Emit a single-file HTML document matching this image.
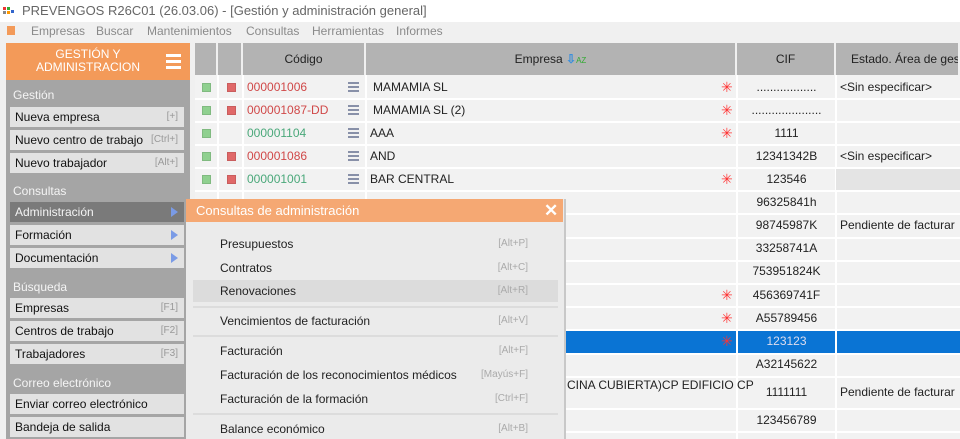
<!DOCTYPE html><html><head><meta charset="utf-8"><style>
*{margin:0;padding:0;box-sizing:border-box}
body{width:960px;height:439px;overflow:hidden;background:#f0f0f0;font-family:"Liberation Sans",sans-serif;font-size:12px;color:#222;position:relative}
.a{position:absolute}
.title{left:0;top:0;width:960px;height:22px;background:#fff;color:#666;font-size:13px;line-height:22px;padding-left:22px}
.menu{left:0;top:22px;width:960px;height:18px;background:#f0f0f0;color:#8a8a8a;font-size:12px;line-height:18px}
.menu span{position:absolute;top:0}
.lp{left:6px;top:43px;width:184px;height:396px;background:#a5a5a5}
.oh{left:6px;top:43px;width:184px;height:37px;background:#f39a59;color:#fff;font-size:12px;text-align:center;line-height:13px;padding-top:5px;padding-right:20px}
.sec{left:13px;color:#f4f4f4;font-size:12px}
.btn{left:10px;width:174px;height:20px;background:#e2e2e2;line-height:20px;padding-left:5px;font-size:12px;color:#111}
.btn i{position:absolute;right:6px;font-style:normal;font-size:10px;color:#999}
.btn.d{background:#7a7a7a;color:#f4f4f4}
.tri{position:absolute;right:6px;top:5px;width:0;height:0;border-left:7px solid #7a9be6;border-top:5px solid transparent;border-bottom:5px solid transparent}
.grid{left:195px;top:43px;width:765px;height:396px;background:#f2f2f2}
.hd{top:43px;height:32px;background:#b3b3b3;line-height:32px;text-align:center;font-size:12px;color:#222;border-right:2px solid #f0f0f0}
.hl{left:195px;width:765px;height:2px;background:#fff}
.vl{width:2px;background:#fff;top:75px;height:364px}
.cell{font-size:12px;line-height:23px}
.sq{width:9px;height:9px;border:1px solid rgba(0,0,0,0.1)}
.pop{left:186px;top:199px;width:380px;height:240px;background:#ebebeb;border-right:2px solid #c8c8c8}
.ph{left:186px;top:199px;width:377px;height:23px;background:#f5a873;color:#fff;font-size:13px;line-height:23px;padding-left:10px}
.it{left:220px;font-size:12px;color:#222}
.sc{left:450px;width:78px;text-align:right;font-size:10px;color:#aaa}
.sep{left:193px;width:365px;height:2px;background:#dcdcdc}
.ast{color:#f33;font-size:14px}
</style></head><body>
<div class="a title">PREVENGOS R26C01 (26.03.06) - [Gestión y administración general]</div>
<div class="a" style="left:3px;top:7px;width:12px;height:10px">
<div class="a" style="left:0;top:0;width:3px;height:3px;background:#e33"></div><div class="a" style="left:4px;top:0;width:3px;height:3px;background:#3a3"></div><div class="a" style="left:8px;top:3px;width:3px;height:3px;background:#36c"></div><div class="a" style="left:0;top:4px;width:3px;height:3px;background:#888"></div><div class="a" style="left:4px;top:4px;width:3px;height:3px;background:#f90"></div></div>
<div class="a menu"><span style="left:7px;top:4px;width:8px;height:9px;background:#f39a59"></span><span style="left:31px">Empresas</span><span style="left:96px">Buscar</span><span style="left:147px">Mantenimientos</span><span style="left:246px">Consultas</span><span style="left:312px">Herramientas</span><span style="left:396px">Informes</span></div>

<div class="a lp"></div>
<div class="a oh">GESTIÓN Y<br>ADMINISTRACION</div>
<div class="a" style="left:166px;top:54px;width:15px;height:3px;background:#fff;box-shadow:0 6px 0 #fff,0 12px 0 #fff"></div>
<div class="a sec" style="top:88px">Gestión</div>
<div class="a btn" style="top:107px">Nueva empresa<i>[+]</i></div>
<div class="a btn" style="top:130px">Nuevo centro de trabajo<i>[Ctrl+]</i></div>
<div class="a btn" style="top:153px">Nuevo trabajador<i>[Alt+]</i></div>
<div class="a sec" style="top:184px">Consultas</div>
<div class="a btn d" style="top:202px">Administración<span class="tri"></span></div>
<div class="a btn" style="top:225px">Formación<span class="tri"></span></div>
<div class="a btn" style="top:248px">Documentación<span class="tri"></span></div>
<div class="a sec" style="top:280px">Búsqueda</div>
<div class="a btn" style="top:298px">Empresas<i>[F1]</i></div>
<div class="a btn" style="top:321px">Centros de trabajo<i>[F2]</i></div>
<div class="a btn" style="top:344px">Trabajadores<i>[F3]</i></div>
<div class="a sec" style="top:376px">Correo electrónico</div>
<div class="a btn" style="top:394px">Enviar correo electrónico</div>
<div class="a btn" style="top:417px">Bandeja de salida</div>

<div class="a grid"></div>
<div class="a hd" style="left:195px;width:23px"></div>
<div class="a hd" style="left:218px;width:25px"></div>
<div class="a hd" style="left:243px;width:123px">Código</div>
<div class="a hd" style="left:366px;width:371px">Empresa <span style="color:#3a8fdc;font-weight:bold">⇩</span><span style="color:#3a3;font-size:8px">AZ</span></div>
<div class="a hd" style="left:737px;width:99px">CIF</div>
<div class="a hd" style="left:836px;width:124px;text-align:left;padding-left:15px;white-space:nowrap;overflow:hidden">Estado. Área de gestión</div>
<div class="a" style="left:566px;top:331px;width:394px;height:22px;background:#0a74d4"></div>
<div class="a hl" style="top:98px"></div><div class="a hl" style="top:121px"></div><div class="a hl" style="top:144px"></div><div class="a hl" style="top:167px"></div><div class="a hl" style="top:190px"></div><div class="a hl" style="top:213px"></div><div class="a hl" style="top:237px"></div><div class="a hl" style="top:260px"></div><div class="a hl" style="top:283px"></div><div class="a hl" style="top:306px"></div><div class="a hl" style="top:329px"></div><div class="a hl" style="top:353px"></div><div class="a hl" style="top:376px"></div><div class="a hl" style="top:408px"></div><div class="a hl" style="top:431px"></div>
<div class="a vl" style="left:217px"></div><div class="a vl" style="left:242px"></div><div class="a vl" style="left:365px"></div><div class="a vl" style="left:736px"></div><div class="a vl" style="left:835px"></div>
<div class="a" style="left:836px;top:169px;width:124px;height:21px;background:#e4e4e4"></div>

<div class="a sq" style="left:202px;top:83px;background:#8fd08f"></div><div class="a sq" style="left:227px;top:83px;background:#e06868"></div>
<div class="a sq" style="left:202px;top:106px;background:#8fd08f"></div><div class="a sq" style="left:227px;top:106px;background:#e06868"></div>
<div class="a sq" style="left:202px;top:129px;background:#8fd08f"></div>
<div class="a sq" style="left:202px;top:152px;background:#8fd08f"></div><div class="a sq" style="left:227px;top:152px;background:#e06868"></div>
<div class="a sq" style="left:202px;top:175px;background:#8fd08f"></div><div class="a sq" style="left:227px;top:175px;background:#e06868"></div>
<div class="a cell" style="left:247px;top:76px;color:#d04848">000001006</div>
<div class="a cell" style="left:247px;top:99px;color:#d04848">000001087-DD</div>
<div class="a cell" style="left:247px;top:122px;color:#4aa87a">000001104</div>
<div class="a cell" style="left:247px;top:145px;color:#d04848">000001086</div>
<div class="a cell" style="left:247px;top:168px;color:#4aa87a">000001001</div>
<div class="a" style="left:348px;top:82px;width:11px;height:2px;background:#8890a8;box-shadow:0 4px 0 #8890a8,0 8px 0 #8890a8"></div>
<div class="a" style="left:348px;top:105px;width:11px;height:2px;background:#8890a8;box-shadow:0 4px 0 #8890a8,0 8px 0 #8890a8"></div>
<div class="a" style="left:348px;top:128px;width:11px;height:2px;background:#8890a8;box-shadow:0 4px 0 #8890a8,0 8px 0 #8890a8"></div>
<div class="a" style="left:348px;top:151px;width:11px;height:2px;background:#8890a8;box-shadow:0 4px 0 #8890a8,0 8px 0 #8890a8"></div>
<div class="a" style="left:348px;top:174px;width:11px;height:2px;background:#8890a8;box-shadow:0 4px 0 #8890a8,0 8px 0 #8890a8"></div>
<div class="a cell" style="left:373px;top:76px">MAMAMIA SL</div>
<div class="a cell" style="left:373px;top:99px">MAMAMIA SL (2)</div>
<div class="a cell" style="left:370px;top:122px">AAA</div>
<div class="a cell" style="left:370px;top:145px">AND</div>
<div class="a cell" style="left:370px;top:168px">BAR CENTRAL</div>
<div class="a cell ast" style="left:721px;top:76px">✳</div>
<div class="a cell ast" style="left:721px;top:99px">✳</div>
<div class="a cell ast" style="left:721px;top:122px">✳</div>
<div class="a cell ast" style="left:721px;top:168px">✳</div>
<div class="a cell ast" style="left:721px;top:284px">✳</div>
<div class="a cell ast" style="left:721px;top:307px">✳</div>
<div class="a cell ast" style="left:721px;top:330px">✳</div>
<div class="a cell" style="left:737px;width:99px;text-align:center;top:76px">..................</div>
<div class="a cell" style="left:737px;width:99px;text-align:center;top:99px">.....................</div>
<div class="a cell" style="left:737px;width:99px;text-align:center;top:122px">1111</div>
<div class="a cell" style="left:737px;width:99px;text-align:center;top:145px">12341342B</div>
<div class="a cell" style="left:737px;width:99px;text-align:center;top:168px">123546</div>
<div class="a cell" style="left:737px;width:99px;text-align:center;top:191px">96325841h</div>
<div class="a cell" style="left:737px;width:99px;text-align:center;top:214px">98745987K</div>
<div class="a cell" style="left:737px;width:99px;text-align:center;top:237px">33258741A</div>
<div class="a cell" style="left:737px;width:99px;text-align:center;top:260px">753951824K</div>
<div class="a cell" style="left:737px;width:99px;text-align:center;top:284px">456369741F</div>
<div class="a cell" style="left:737px;width:99px;text-align:center;top:307px">A55789456</div>
<div class="a cell" style="left:737px;width:99px;text-align:center;top:330px;color:#dde">123123</div>
<div class="a cell" style="left:737px;width:99px;text-align:center;top:353px">A32145622</div>
<div class="a cell" style="left:737px;width:99px;text-align:center;top:381px">1111111</div>
<div class="a cell" style="left:737px;width:99px;text-align:center;top:409px">123456789</div>
<div class="a cell" style="left:840px;top:76px">&lt;Sin especificar&gt;</div>
<div class="a cell" style="left:840px;top:145px">&lt;Sin especificar&gt;</div>
<div class="a cell" style="left:840px;top:214px">Pendiente de facturar</div>
<div class="a cell" style="left:840px;top:381px">Pendiente de facturar</div>
<div class="a cell" style="left:567px;top:374px">CINA CUBIERTA)CP EDIFICIO CP</div>

<div class="a pop"></div>
<div class="a ph">Consultas de administración</div>
<div class="a" style="left:544px;top:201px;color:#fff;font-size:17px;font-weight:bold">✕</div>
<div class="a" style="left:193px;top:280px;width:365px;height:22px;background:#dcdcdc"></div>
<div class="a it" style="top:237px">Presupuestos</div><div class="a sc" style="top:238px">[Alt+P]</div>
<div class="a it" style="top:261px">Contratos</div><div class="a sc" style="top:262px">[Alt+C]</div>
<div class="a it" style="top:284px">Renovaciones</div><div class="a sc" style="top:285px">[Alt+R]</div>
<div class="a sep" style="top:306px"></div>
<div class="a it" style="top:314px">Vencimientos de facturación</div><div class="a sc" style="top:315px">[Alt+V]</div>
<div class="a sep" style="top:335px"></div>
<div class="a it" style="top:344px">Facturación</div><div class="a sc" style="top:345px">[Alt+F]</div>
<div class="a it" style="top:368px">Facturación de los reconocimientos médicos</div><div class="a sc" style="top:369px">[Mayús+F]</div>
<div class="a it" style="top:392px">Facturación de la formación</div><div class="a sc" style="top:393px">[Ctrl+F]</div>
<div class="a sep" style="top:413px"></div>
<div class="a it" style="top:422px">Balance económico</div><div class="a sc" style="top:423px">[Alt+B]</div>
</body></html>
